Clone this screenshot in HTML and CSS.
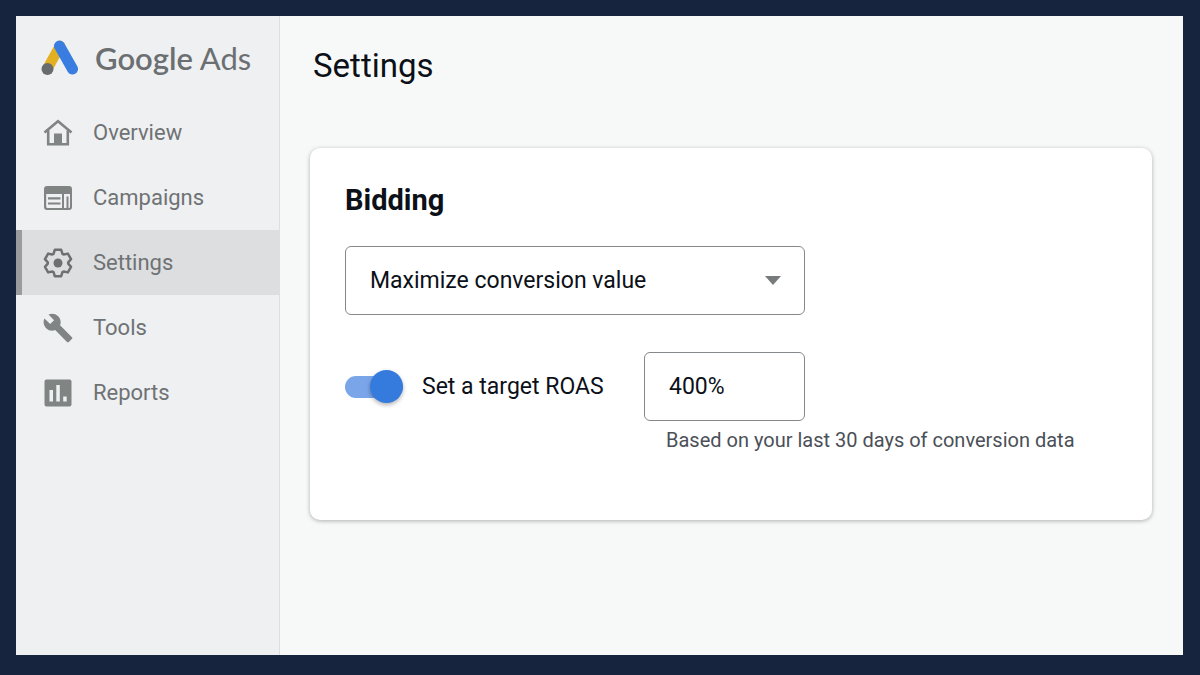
FILE: index.html
```html
<!DOCTYPE html>
<html lang="en">
<head>
<meta charset="utf-8">
<meta name="viewport" content="width=device-width, initial-scale=1">
<title>Settings - Google Ads</title>
<link rel="stylesheet" href="styles.css">
</head>
<body>
<div class="app">
  <aside class="sidebar">
    <a class="brand" href="#">
      <svg class="brand-mark" viewBox="0 0 38 36" aria-hidden="true">
        <path d="M19 6 6.500 28.500" stroke="#e3b022" stroke-width="10.500" stroke-linecap="round"/>
        <path d="M18.500 6 31.500 29" stroke="#3a7de0" stroke-width="11" stroke-linecap="round"/>
        <circle cx="6.500" cy="29" r="6" fill="#686c6e"/>
      </svg>
      <span class="brand-name"><span class="brand-strong">Google</span> Ads</span>
    </a>
    <nav class="nav">
      <a class="nav-item" href="#">
        <svg class="icon" viewBox="0 0 30 30" aria-hidden="true">
          <path d="M1.500 14.500 15 3.200 28.500 14.500M5.200 12.500V26.300H24.800V12.500" fill="none" stroke="currentColor" stroke-width="2.600"/>
          <path d="M11 15.500h8v11h-8z" fill="currentColor"/>
        </svg>
        <span class="nav-text">Overview</span>
      </a>
      <a class="nav-item" href="#">
        <svg class="icon" viewBox="0 0 30 30" aria-hidden="true">
          <path fill="currentColor" fill-rule="evenodd" d="M4 3H26a3 3 0 0 1 3 3V24a3 3 0 0 1-3 3H4a3 3 0 0 1-3-3V6a3 3 0 0 1 3-3ZM3.200 11V23.500a1.500 1.500 0 0 0 1.500 1.500H19V11ZM21 13.500V25H23.500V13.500ZM21 11V13.500H25.500V25H26a1 1 0 0 0 1-1V11Z"/>
          <path d="M5 15.300H17.500M5 20.500H17.500" stroke="currentColor" stroke-width="2.200"/>
        </svg>
        <span class="nav-text">Campaigns</span>
      </a>
      <a class="nav-item nav-item-active" href="#" aria-current="page">
        <svg class="icon" viewBox="-15 -15 30 30" aria-hidden="true">
          <path d="M-4.500-9.200-3.200-13.200H3.200L4.500-9.200 5.720-8.500 9.830-9.370 13.030-3.830 10.220-.7V.7L13.030 3.830 9.830 9.370 5.720 8.500 4.500 9.200 3.200 13.200H-3.200L-4.500 9.200-5.720 8.500-9.830 9.370-13.030 3.830-10.220.7V-.7L-13.030-3.830-9.830-9.370-5.720-8.500Z" fill="none" stroke="currentColor" stroke-width="2.500" stroke-linejoin="round"/>
          <circle r="4.500" fill="currentColor"/>
        </svg>
        <span class="nav-text">Settings</span>
      </a>
      <a class="nav-item" href="#">
        <svg class="icon" viewBox="0.500 0.500 23 23" aria-hidden="true">
          <path fill="currentColor" d="M22.700 19l-9.100-9.100c.9-2.300.4-5-1.500-6.900-2-2-5-2.400-7.400-1.300L9 6 6 9 1.600 4.700C.4 7.100.9 10.100 2.900 12.100c1.900 1.900 4.600 2.400 6.900 1.500l9.100 9.100c.4.4 1 .4 1.400 0l2.300-2.300c.5-.4.5-1.100.1-1.400z"/>
        </svg>
        <span class="nav-text">Tools</span>
      </a>
      <a class="nav-item" href="#">
        <svg class="icon" viewBox="0 0 30 30" aria-hidden="true">
          <path fill="currentColor" fill-rule="evenodd" d="M3.500 1.500H26.500a2 2 0 0 1 2 2V26.500a2 2 0 0 1-2 2H3.500A2 2 0 0 1 1.500 26.500V3.500A2 2 0 0 1 3.500 1.500ZM6.500 12V23.500H10V12ZM13.300 7V23.500H16.800V7ZM20.200 18.500V23.500H23.700V18.500Z"/>
        </svg>
        <span class="nav-text">Reports</span>
      </a>
    </nav>
  </aside>
  <main class="main">
    <h1 class="page-title">Settings</h1>
    <section class="card">
      <h2 class="card-title">Bidding</h2>
      <div class="select-wrap">
        <select class="field" aria-label="Bidding focus">
          <option>Maximize conversion value</option>
        </select>
        <svg class="caret" viewBox="0 0 16 9" aria-hidden="true"><path d="M0 0H16L8 9Z" fill="#777b7c"/></svg>
      </div>
      <div class="target">
        <label class="switch-label">
          <input class="switch" type="checkbox" role="switch" checked>
          Set a target ROAS
        </label>
        <input class="field field-small" type="text" value="400%" aria-label="Target ROAS" aria-describedby="roas-hint">
      </div>
      <p class="hint" id="roas-hint">Based on your last 30 days of conversion data</p>
    </section>
  </main>
</div>
</body>
</html>
```

FILE: styles.css
```css
* {
  box-sizing: border-box;
}

body {
  margin: 0;
  min-height: 100vh;
  display: flex;
  padding: 16px 17px 20px 16px;
  background: #17243d;
  color: #0c1018;
  font-family: Roboto, "Liberation Sans", sans-serif;
  font-size: 23px;
}

.app {
  flex: 1;
  display: flex;
  background: #f7f9f9;
}

.sidebar {
  flex: 0 0 264px;
  border-right: 1px solid #dcdfe1;
  background: #eef0f1;
}

.brand {
  display: flex;
  align-items: center;
  gap: 16px;
  height: 84px;
  padding-left: 25px;
  color: #6b6f71;
  text-decoration: none;
}

.brand-mark {
  width: 38px;
  height: 36px;
}

.brand-name {
  font-family: Lato, Roboto, sans-serif;
  font-size: 31px;
  line-height: 40px;
  white-space: nowrap;
}

.brand-strong {
  font-weight: 600;
}

.nav-item {
  display: flex;
  align-items: center;
  gap: 20px;
  height: 65px;
  padding-left: 27px;
  color: #808483;
  font-size: 22px;
  text-decoration: none;
}

.nav-item-active {
  padding-left: 21px;
  border-left: 6px solid #999b9d;
  background: #dddee0;
  color: #6c7072;
}

.nav-text {
  color: #6f7274;
}

.icon {
  width: 30px;
  height: 30px;
}

.main {
  flex: 1;
  min-width: 0;
  padding: 28px 31px 28px 30px;
}

.page-title {
  margin: 0 0 60px 3px;
  font-size: 33px;
  font-weight: 400;
  line-height: 44px;
}

.card {
  padding: 32px 35px 66px;
  border-radius: 10px;
  background: #fff;
  box-shadow: 0 1px 4px rgba(60, 64, 67, 0.4);
}

.card-title {
  margin: 0 0 26px;
  font-size: 29px;
  font-weight: 700;
  line-height: 40px;
}

.select-wrap {
  display: grid;
  align-items: center;
  max-width: 460px;
}

.select-wrap > * {
  grid-area: 1 / 1;
}

.field {
  width: 100%;
  height: 69px;
  padding: 0 24px;
  appearance: none;
  border: 1px solid #85898b;
  border-radius: 6px;
  background: #fff;
  color: inherit;
  font: inherit;
}

.field-small {
  width: 161px;
}

.caret {
  justify-self: end;
  width: 16px;
  height: 9px;
  margin-right: 24px;
  pointer-events: none;
}

.target {
  display: flex;
  align-items: center;
  justify-content: space-between;
  max-width: 460px;
  margin-top: 37px;
}

.switch-label {
  display: flex;
  align-items: center;
  gap: 19px;
}

.switch {
  display: flex;
  align-items: center;
  justify-content: flex-end;
  width: 58px;
  height: 22px;
  margin: 0;
  appearance: none;
  border-radius: 11px;
  background: #7ba5e9;
}

.switch::before {
  content: "";
  flex: none;
  width: 33px;
  height: 33px;
  border-radius: 50%;
  background: #347bdd;
  box-shadow: 0 2px 4px rgba(0, 0, 0, 0.3);
}

.hint {
  margin: 5px 0 0 321px;
  color: #4b5058;
  font-size: 20px;
  line-height: 28px;
}
```
